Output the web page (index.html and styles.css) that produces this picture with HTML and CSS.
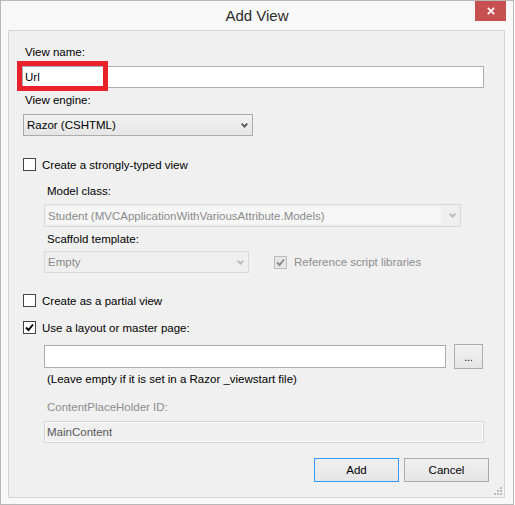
FILE: index.html
```html
<!DOCTYPE html>
<html>
<head>
<meta charset="utf-8">
<title>Add View</title>
<link rel="stylesheet" href="styles.css">
</head>
<body>
<div class="window">
  <div class="titlebar">
    <span class="title">Add View</span>
    <div class="close"><svg width="8" height="8" viewBox="0 0 8 8"><path d="M0.8 0.8 L7.2 7.2 M7.2 0.8 L0.8 7.2" stroke="#fff" stroke-width="1.7"/></svg></div>
  </div>
  <div class="panel">
    <div class="label">View name:</div>
    <div class="name-wrap">
      <div class="field name">Url</div>
      <div class="highlight"></div>
    </div>
    <div class="label gap5">View engine:</div>
    <div class="select engine"><span>Razor (CSHTML)</span><svg class="arrow" width="7" height="5" viewBox="0 0 7 5"><path d="M0.7 0.7 L3.5 3.7 L6.3 0.7" fill="none" stroke="#555" stroke-width="1.8"/></svg></div>

    <div class="check-row typed">
      <span class="box"></span><span>Create a strongly-typed view</span>
    </div>

    <div class="indent">
      <div class="label mt12">Model class:</div>
      <div class="select dis model"><span class="inner">Student (MVCApplicationWithVariousAttribute.Models)</span><svg class="arrow" width="7" height="5" viewBox="0 0 7 5"><path d="M0.7 0.7 L3.5 3.7 L6.3 0.7" fill="none" stroke="#b8b8b8" stroke-width="1.8"/></svg></div>
      <div class="label gap5">Scaffold template:</div>
      <div class="scaffold-row">
        <div class="select dis empty"><span>Empty</span><svg class="arrow" width="7" height="5" viewBox="0 0 7 5"><path d="M0.7 0.7 L3.5 3.7 L6.3 0.7" fill="none" stroke="#b8b8b8" stroke-width="1.8"/></svg></div>
        <div class="check-row ref">
          <span class="box dis-box"><svg width="11" height="11" viewBox="0 0 11 11"><path d="M2 5.5 L4.5 8 L9 2.5" fill="none" stroke="#8c8c8c" stroke-width="1.9"/></svg></span><span class="gray">Reference script libraries</span>
        </div>
      </div>
    </div>

    <div class="check-row partial">
      <span class="box"></span><span>Create as a partial view</span>
    </div>
    <div class="check-row layout">
      <span class="box"><svg width="11" height="11" viewBox="0 0 11 11"><path d="M2 5.5 L4.5 8 L9 2.5" fill="none" stroke="#000" stroke-width="1.9"/></svg></span><span>Use a layout or master page:</span>
    </div>

    <div class="indent">
      <div class="layout-row">
        <div class="field layout-field"></div>
        <div class="browse">...</div>
      </div>
      <div class="label mt3">(Leave empty if it is set in a Razor _viewstart file)</div>
      <div class="label gray mt13">ContentPlaceHolder ID:</div>
      <div class="field main">MainContent</div>
    </div>

    <div class="buttons">
      <div class="btn default">Add</div>
      <div class="btn">Cancel</div>
    </div>
    <svg class="grip" width="8" height="8" viewBox="0 0 8 8" fill="#bcbcbc">
      <rect x="6" y="0" width="2" height="2"/>
      <rect x="3" y="3" width="2" height="2"/>
      <rect x="6" y="3" width="2" height="2"/>
      <rect x="0" y="6" width="2" height="2"/>
      <rect x="3" y="6" width="2" height="2"/>
      <rect x="6" y="6" width="2" height="2"/>
    </svg>
  </div>
</div>
</body>
</html>
```

FILE: styles.css
```css
* { box-sizing: border-box; }
html, body { margin: 0; padding: 0; }
body {
  width: 515px;
  height: 505px;
  background: #ffffff;
  font-family: "Liberation Sans", Arial, sans-serif;
  font-size: 11.5px;
  color: #000;
}
.window {
  width: 514px;
  height: 505px;
  border: 1px solid #b8b8b8;
  background: #f8f8f8;
  display: flex;
  flex-direction: column;
}
.titlebar {
  height: 29px;
  display: grid;
  grid-template-columns: 1fr auto 1fr;
  align-items: start;
}
.title {
  grid-column: 2;
  font-size: 15px;
  line-height: 29px;
  color: #2b2b2b;
}
.close {
  grid-column: 3;
  justify-self: end;
  margin-right: 7px;
  width: 31px;
  height: 20px;
  background: #c75050;
  display: flex;
  align-items: center;
  justify-content: center;
  padding-left: 1px;
}
.panel {
  flex: 1;
  margin: 0 8px 6px 7px;
  border: 1px solid #d3d3d3;
  background: #f0f0f0;
  padding: 14px 0 0 13px;
  display: flex;
  flex-direction: column;
  align-items: flex-start;
  min-height: 0;
}
.label {
  padding-left: 3px;
  height: 15px;
  line-height: 15px;
  white-space: nowrap;
}
.gap5 { margin-top: 5px; }
.mt3 { margin-top: 3px; }
.mt12 { margin-top: 12px; }
.mt13 { margin-top: 13px; }
.gray { color: #8d8d8d; }

.name-wrap {
  position: relative;
  margin-top: 6px;
}
.field {
  border: 1px solid #abadb3;
  background: #fff;
  padding-left: 2px;
  display: flex;
  align-items: center;
  white-space: nowrap;
}
.name { width: 462px; height: 22px; }
.highlight {
  position: absolute;
  left: -5px;
  top: -5px;
  width: 91px;
  height: 30px;
  border: 5px solid #e8212b;
}

.select {
  display: flex;
  align-items: center;
  justify-content: space-between;
  border: 1px solid #acacac;
  background: linear-gradient(#f2f2f2, #e5e5e5);
  white-space: nowrap;
}
.engine {
  margin-top: 6px;
  margin-left: 1px;
  width: 230px;
  height: 22px;
  padding: 0 4px 0 3px;
}
.arrow { flex: none; }
.select.dis {
  border-color: #d9d9d9;
  background: #efefef;
  color: #8a8a8a;
}
.model {
  margin-top: 5px;
  width: 417px;
  height: 23px;
  padding: 2px 4px 2px 1px;
}
.model .inner {
  width: 395px;
  height: 100%;
  background: #f6f6f6;
  padding-left: 2px;
  display: flex;
  align-items: center;
  overflow: hidden;
}
.scaffold-row {
  display: flex;
  align-items: center;
  margin-top: 4px;
}
.empty {
  width: 205px;
  height: 22px;
  padding: 0 4px 0 3px;
}

.check-row {
  display: flex;
  align-items: center;
  gap: 6px;
  height: 15px;
  white-space: nowrap;
}
.box {
  width: 13px;
  height: 13px;
  border: 1px solid #444;
  background: #fff;
  display: flex;
  align-items: center;
  justify-content: center;
  flex: none;
}
.dis-box {
  border-color: #bcbcbc;
  background: #e6e6e6;
}
.typed { margin-top: 21px; margin-left: 1px; }
.ref { margin-left: 25px; gap: 7px; }
.partial { margin-top: 20px; margin-left: 1px; }
.layout { margin-top: 12px; margin-left: 1px; }

.indent {
  margin-left: 22px;
  display: flex;
  flex-direction: column;
  align-items: flex-start;
}
.layout-row {
  margin-top: 9px;
  display: flex;
  align-items: center;
  height: 25px;
  gap: 8px;
}
.layout-field {
  width: 402px;
  height: 23px;
  border-color: #acacac;
}
.browse {
  width: 29px;
  height: 25px;
  border: 1px solid #acacac;
  background: linear-gradient(#f2f2f2, #e5e5e5);
  display: flex;
  align-items: center;
  justify-content: center;
  font-size: 10px;
  padding-top: 1px;
}
.main {
  margin-top: 6px;
  width: 440px;
  height: 22px;
  border-color: #d5d5d5;
  background: #f0f0f0;
  box-shadow: inset 0 0 0 1px #fbfbfb;
  color: #595959;
}

.buttons {
  align-self: stretch;
  display: flex;
  justify-content: flex-end;
  gap: 5px;
  margin-top: 15px;
  padding-right: 15px;
}
.btn {
  width: 85px;
  height: 24px;
  border: 1px solid #acacac;
  background: linear-gradient(#f0f0f0, #e5e5e5);
  display: flex;
  align-items: center;
  justify-content: center;
  color: #000;
}
.btn.default { border-color: #3399ff; }
.grip {
  align-self: flex-end;
  margin-top: 5px;
  margin-right: 2px;
  flex: none;
}
```
